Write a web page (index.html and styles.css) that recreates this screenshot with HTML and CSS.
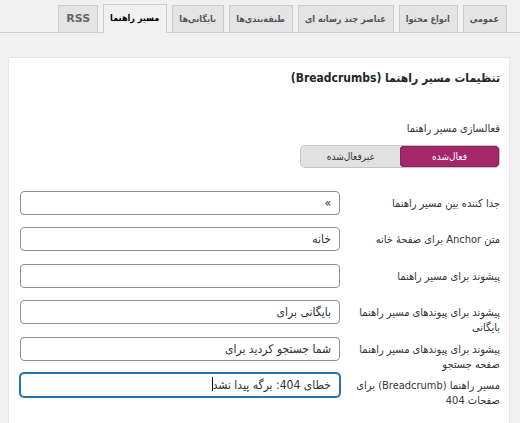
FILE: index.html
```html
<!DOCTYPE html>
<html lang="fa" dir="rtl">
<head>
<meta charset="utf-8">
<link rel="stylesheet" href="styles.css">
</head>
<body>
<div class="wrap">
  <nav class="tabs">
    <a class="tab">عمومی</a>
    <a class="tab">انواع محتوا</a>
    <a class="tab">عناصر چند رسانه ای</a>
    <a class="tab">طبقه‌بندی‌ها</a>
    <a class="tab">بایگانی‌ها</a>
    <a class="tab active">مسیر راهنما</a>
    <a class="tab latin">RSS</a>
  </nav>
  <section class="panel">
    <h2 class="title">تنظیمات مسیر راهنما (Breadcrumbs)</h2>
    <div class="enable-label">فعالسازی مسیر راهنما</div>
    <div class="switch">
      <span class="opt on">فعال‌شده</span>
      <span class="opt">غیرفعال‌شده</span>
    </div>
    <div class="form">
      <label class="lbl">جدا کننده بین مسیر راهنما</label>
      <div class="field">»</div>
      <label class="lbl">متن Anchor برای صفحهٔ خانه</label>
      <div class="field">خانه</div>
      <label class="lbl">پیشوند برای مسیر راهنما</label>
      <div class="field"></div>
      <label class="lbl">پیشوند برای پیوندهای مسیر راهنما بایگانی</label>
      <div class="field">بایگانی برای</div>
      <label class="lbl">پیشوند برای پیوندهای مسیر راهنما صفحه جستجو</label>
      <div class="field">شما جستجو کردید برای</div>
      <label class="lbl">مسیر راهنما (Breadcrumb) برای صفحات 404</label>
      <div class="field focus">خطای 404: برگه پیدا نشد<span class="caret"></span></div>
    </div>
  </section>
</div>
</body>
</html>
```
FILE: styles.css
```css
html, body {
  margin: 0;
  padding: 0;
  background: #f1f1f1;
  font-family: "DejaVu Sans", sans-serif;
  color: #23282d;
  overflow: hidden;
}

.wrap {
  height: 423px;
  display: flex;
  flex-direction: column;
}

.tabs {
  display: flex;
  gap: 5px;
  padding: 5px 13px 0 0;
  border-bottom: 1px solid #cccccc;
  height: 27px;
}

.tab {
  box-sizing: border-box;
  height: 28px;
  margin-bottom: -1px;
  padding: 0 7px 0 6px;
  border: 1px solid #cccccc;
  background: #e4e4e4;
  color: #555555;
  font-family: "DejaVu Sans Condensed", "DejaVu Sans", sans-serif;
  font-size: 9px;
  font-weight: bold;
  line-height: 26px;
  white-space: nowrap;
}

.tab.latin {
  font-family: "DejaVu Sans", sans-serif;
  font-size: 11px;
  padding: 0 7px;
  color: #666666;
}

.tab.active {
  background: #f1f1f1;
  color: #000000;
  border-bottom-color: #f1f1f1;
  margin-top: -1px;
  height: 29px;
}

.panel {
  flex: 1;
  margin: 24px 10px 0 8px;
  padding: 10px 9px 0 13px;
  background: #ffffff;
  border: 1px solid #e6e6e6;
  border-bottom: none;
}

.title {
  margin: 0;
  font-family: "DejaVu Sans Condensed", "DejaVu Sans", sans-serif;
  font-size: 12px;
  font-weight: bold;
  line-height: 20px;
  color: #23282d;
}

.enable-label {
  margin-top: 33px;
  font-family: "DejaVu Sans Condensed", "DejaVu Sans", sans-serif;
  font-size: 11px;
  line-height: 16px;
  color: #32373c;
}

.switch {
  display: flex;
  width: 200px;
  height: 23px;
  margin-top: 8px;
  box-sizing: border-box;
  border: 1px solid #c4c4c4;
  border-radius: 5px;
  background: #e2e2e2;
  overflow: hidden;
  font-family: "DejaVu Sans Condensed", "DejaVu Sans", sans-serif;
}

.opt {
  flex: 1;
  text-align: center;
  font-size: 10px;
  line-height: 21px;
  color: #333333;
}

.opt.on {
  background: #a3276a;
  color: #ffffff;
  border-radius: 4px;
  box-shadow: inset 0 0 0 1px #8d1f5a;
}

.form {
  display: grid;
  grid-template-columns: 150px 320px;
  grid-auto-rows: 36.4px;
  column-gap: 10px;
  margin-top: 23px;
}

.lbl {
  font-family: "DejaVu Sans Condensed", "DejaVu Sans", sans-serif;
  font-size: 11px;
  line-height: 15px;
  padding-top: 5px;
  color: #32373c;
}

.field {
  box-sizing: border-box;
  height: 24px;
  padding: 0 8px;
  border: 1px solid #8c8f94;
  border-radius: 4px;
  background: #ffffff;
  font-family: "DejaVu Sans Condensed", "DejaVu Sans", sans-serif;
  font-size: 12px;
  line-height: 22px;
  color: #2c3338;
  white-space: nowrap;
}

.field.focus {
  border-color: #2271b1;
  box-shadow: 0 0 0 1px #2271b1;
}

.caret {
  display: inline-block;
  width: 1px;
  height: 14px;
  background: #000000;
  vertical-align: -2px;
}
```
